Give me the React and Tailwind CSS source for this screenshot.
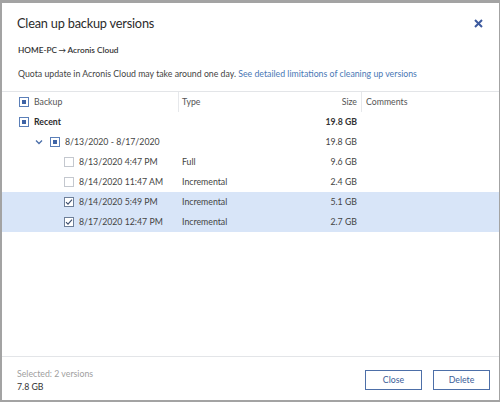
import React from 'react';

const rows = [
  { level: 0, label: 'Recent', type: '', size: '19.8 GB', state: 'partial', bold: true },
  { level: 1, label: '8/13/2020 - 8/17/2020', type: '', size: '19.8 GB', state: 'partial', chevron: true },
  { level: 2, label: '8/13/2020 4:47 PM', type: 'Full', size: '9.6 GB', state: 'off' },
  { level: 2, label: '8/14/2020 11:47 AM', type: 'Incremental', size: '2.4 GB', state: 'off' },
  { level: 2, label: '8/14/2020 5:49 PM', type: 'Incremental', size: '5.1 GB', state: 'on' },
  { level: 2, label: '8/17/2020 12:47 PM', type: 'Incremental', size: '2.7 GB', state: 'on' },
];

function Check({ state }) {
  if (state === 'partial') {
    return (
      <span className="flex h-[10px] w-[10px] shrink-0 items-center justify-center border border-[#5b7fb8] bg-white">
        <span className="h-[4px] w-[4px] bg-[#3f64a6]" />
      </span>
    );
  }
  if (state === 'on') {
    return (
      <span className="flex h-[10px] w-[10px] shrink-0 items-center justify-center border border-[#6d7f99] bg-white">
        <svg width="8" height="8" viewBox="0 0 8 8">
          <path d="M1 4.2 L3 6.2 L7 1.6" fill="none" stroke="#3d4f6e" strokeWidth="1.1" />
        </svg>
      </span>
    );
  }
  return <span className="h-[10px] w-[10px] shrink-0 border border-[#c4c8cf] bg-white" />;
}

export default function App() {
  const indent = { 0: 'pl-[17px]', 1: 'pl-[33px]', 2: 'pl-[62px]' };
  return (
    <div
      className="flex h-[402px] w-[500px] flex-col border-t-[3px] border-l-2 border-b-2 border-r border-[#a3a3a3] bg-white text-[#333]"
      style={{ fontFamily: 'Lato, "Noto Sans", sans-serif' }}
    >
      <div className="flex-1">
        <div className="flex items-center justify-between pl-[15px] pr-[16px] pt-[9px]">
          <h1 className="text-[12.75px] leading-[22px] tracking-[-0.2px] text-[#2b2b2b]">Clean up backup versions</h1>
          <svg width="9" height="9" viewBox="0 0 9 9" className="mt-[1px]">
            <path d="M1 1 L8 8 M8 1 L1 8" stroke="#3d5a9e" strokeWidth="2" />
          </svg>
        </div>
        <div className="pl-[16px] pt-[9px] text-[8.25px] font-semibold leading-[14px] text-[#333]">
          HOME-PC<span className="px-[1.5px] text-[7.5px]">→</span>Acronis Cloud
        </div>
        <div className="pl-[16px] pt-[9px] text-[8.75px] leading-[14px] text-[#444]">
          Quota update in Acronis Cloud may take around one day.{' '}
          <span className="text-[#4a78b5]">See detailed limitations of cleaning up versions</span>
        </div>

        <div className="mt-[10px] border-t border-[#e3e5e8] text-[8.75px]">
          <div className="flex h-[20px] items-center text-[#555]">
            <div className="flex w-[176px] items-center gap-[5px] pl-[17px]">
              <Check state="partial" />
              <span>Backup</span>
            </div>
            <div className="flex h-full w-[183px] items-center border-l border-[#e6e8eb] pl-[3px]">
              <span className="flex-1">Type</span>
              <span className="pr-[4px]">Size</span>
            </div>
            <div className="flex h-full flex-1 items-center border-l border-[#e6e8eb] pl-[4px]">Comments</div>
          </div>
          {rows.map((r, i) => (
            <div
              key={i}
              className={`flex h-[20px] items-center ${r.state === 'on' ? 'bg-[#d8e5f8]' : ''}`}
            >
              <div className={`flex w-[176px] items-center gap-[5px] ${indent[r.level]}`}>
                {r.chevron && (
                  <svg width="8" height="6" viewBox="0 0 8 6" className="mr-[2px]">
                    <path d="M1 1.5 L4 4.5 L7 1.5" fill="none" stroke="#4a6ea9" strokeWidth="1.3" />
                  </svg>
                )}
                <Check state={r.state} />
                <span className={r.bold ? 'font-bold text-[#2b2b2b]' : 'text-[#444]'}>{r.label}</span>
              </div>
              <div className="flex w-[184px] items-center pl-[4px] text-[#444]">
                <span className="flex-1">{r.type}</span>
                <span className={`pr-[5px] ${r.bold ? 'font-bold text-[#333]' : ''}`}>{r.size}</span>
              </div>
            </div>
          ))}
        </div>
      </div>

      <div className="flex items-center justify-between border-t border-[#e3e5e8] pb-[7px] pl-[15px] pr-[9px] pt-[10px]">
        <div className="text-[8.75px] leading-[13px]">
          <div className="text-[#a0a0a0]">Selected: 2 versions</div>
          <div className="text-[#333]">7.8 GB</div>
        </div>
        <div className="flex gap-[11px]">
          <button className="h-[20px] w-[57px] border border-[#4d6fa8] bg-white text-[8.75px] text-[#3b5d99]">Close</button>
          <button className="h-[20px] w-[57px] border border-[#4d6fa8] bg-white text-[8.75px] text-[#3b5d99]">Delete</button>
        </div>
      </div>
    </div>
  );
}
